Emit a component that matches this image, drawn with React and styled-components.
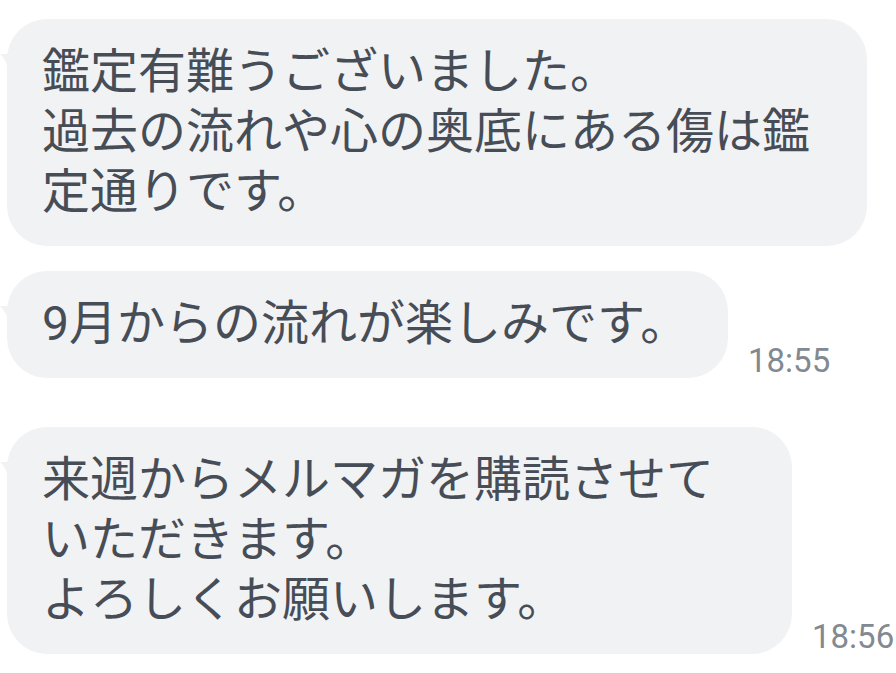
import React from "react";
import styled, { createGlobalStyle } from "styled-components";

const GlobalStyle = createGlobalStyle`
  html, body {
    margin: 0;
    padding: 0;
    background: #ffffff;
  }
`;

const ChatContainer = styled.div`
  width: 896px;
  height: 673px;
  padding: 19px 0 0 7px;
  box-sizing: border-box;
  display: flex;
  flex-direction: column;
  overflow: hidden;
  background: #ffffff;
`;

const MessageRow = styled.div`
  display: flex;
  align-items: flex-end;
  gap: 20px;
  margin-top: ${(p) => p.gap || 0}px;
`;

const Bubble = styled.div`
  position: relative;
  width: ${(p) => p.width}px;
  box-sizing: border-box;
  padding: 23px 0 24px 35px;
  background: #f1f2f4;
  border-radius: 40px;
  color: #474d56;
  font-family: Roboto, "Noto Sans CJK JP", sans-serif;
  font-size: 48px;
  line-height: 60px;
  white-space: nowrap;
`;

const Tail = styled.svg`
  position: absolute;
  left: -7px;
  top: 35px;
  width: 12px;
  height: 15px;
  display: block;
`;

const Time = styled.span`
  font-family: Roboto, "Liberation Sans", sans-serif;
  font-size: 33px;
  line-height: 33px;
  color: #828991;
  margin-bottom: 1px;
`;

const BubbleTail = () => (
  <Tail viewBox="0 0 12 15">
    <path d="M0 0 L12 0 L12 15 L8 15 C7 9 4 4 0 0 Z" fill="#f1f2f4" />
  </Tail>
);

const Message = ({ width, gap, time, children }) => (
  <MessageRow gap={gap}>
    <Bubble width={width}>
      <BubbleTail />
      {children}
    </Bubble>
    {time && <Time>{time}</Time>}
  </MessageRow>
);

export default function App() {
  return (
    <>
      <GlobalStyle />
      <ChatContainer>
        <Message width={860}>
          鑑定有難うございました。
          <br />
          過去の流れや心の奥底にある傷は鑑
          <br />
          定通りです。
        </Message>
        <Message width={721} gap={25} time="18:55">
          9月からの流れが楽しみです。
        </Message>
        <Message width={785} gap={49} time="18:56">
          来週からメルマガを購読させて
          <br />
          いただきます。
          <br />
          よろしくお願いします。
        </Message>
      </ChatContainer>
    </>
  );
}
